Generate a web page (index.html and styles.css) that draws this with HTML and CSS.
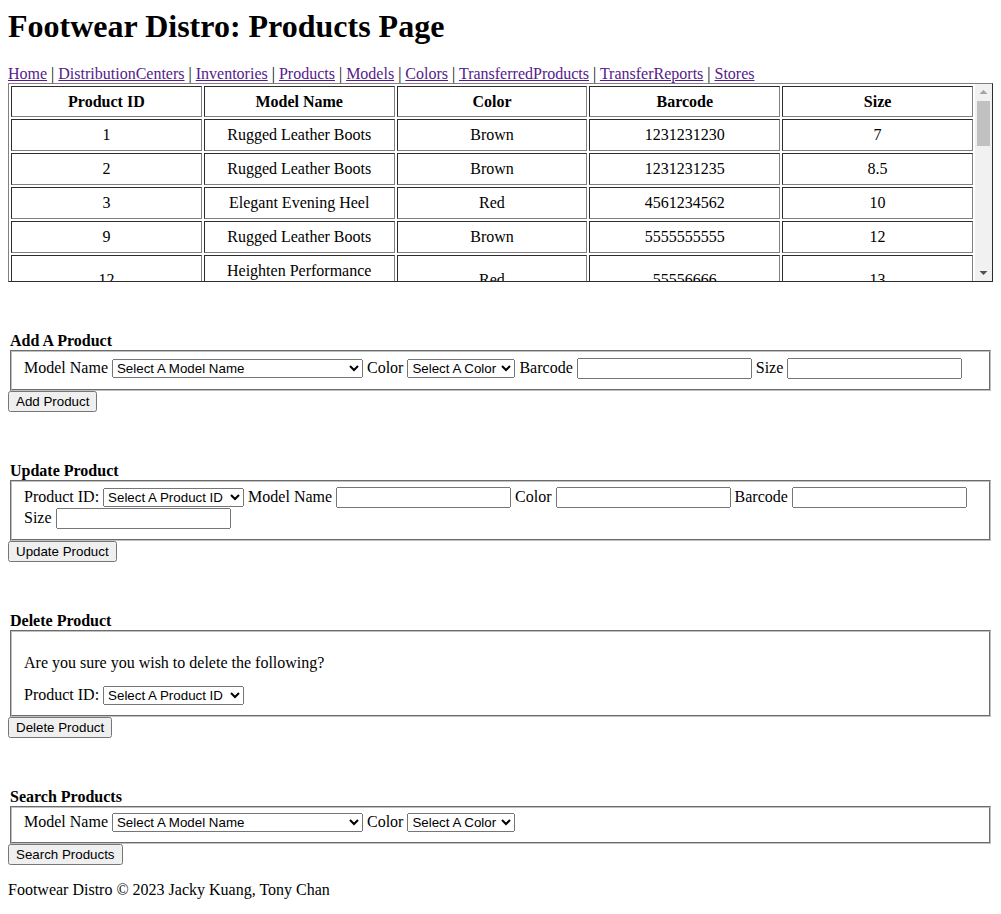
FILE: index.html
```html
<!DOCTYPE html>
<html lang="en">
<head>
<meta charset="utf-8">
<title>Footwear Distro: Products Page</title>
<link rel="stylesheet" href="styles.css">
</head>
<body>
<header class="page-header">
  <h1 class="page-title">Footwear Distro: Products Page</h1>
  <nav class="nav">
    <a href="#">Home</a> | <a href="#">DistributionCenters</a> | <a href="#">Inventories</a> | <a href="#">Products</a> | <a href="#">Models</a> | <a href="#">Colors</a> | <a href="#">TransferredProducts</a> | <a href="#">TransferReports</a> | <a href="#">Stores</a>
  </nav>
</header>

<div class="browse">
  <div class="browse-scroll">
    <table class="data-table">
      <thead>
        <tr><th>Product ID</th><th>Model Name</th><th>Color</th><th>Barcode</th><th>Size</th></tr>
      </thead>
      <tbody>
        <tr><td>1</td><td>Rugged Leather Boots</td><td>Brown</td><td>1231231230</td><td>7</td></tr>
        <tr><td>2</td><td>Rugged Leather Boots</td><td>Brown</td><td>1231231235</td><td>8.5</td></tr>
        <tr><td>3</td><td>Elegant Evening Heel</td><td>Red</td><td>4561234562</td><td>10</td></tr>
        <tr><td>9</td><td>Rugged Leather Boots</td><td>Brown</td><td>5555555555</td><td>12</td></tr>
        <tr><td>12</td><td>Heighten Performance Sneakers</td><td>Red</td><td>55556666</td><td>13</td></tr>
        <tr><td>13</td><td>Classic Canvas Sneaker</td><td>White</td><td>7788990011</td><td>9</td></tr>
        <tr><td>14</td><td>Classic Canvas Sneaker</td><td>Black</td><td>7788990012</td><td>10</td></tr>
        <tr><td>15</td><td>Elegant Evening Heel</td><td>Black</td><td>4561234563</td><td>7.5</td></tr>
        <tr><td>16</td><td>Trail Runner</td><td>Blue</td><td>3213213210</td><td>11</td></tr>
        <tr><td>17</td><td>Trail Runner</td><td>Green</td><td>3213213211</td><td>9.5</td></tr>
        <tr><td>18</td><td>Rugged Leather Boots</td><td>Black</td><td>1231231236</td><td>10</td></tr>
        <tr><td>19</td><td>Summer Sandal</td><td>Brown</td><td>6546546540</td><td>8</td></tr>
        <tr><td>20</td><td>Summer Sandal</td><td>White</td><td>6546546541</td><td>6</td></tr>
        <tr><td>21</td><td>Trail Runner</td><td>Red</td><td>3213213212</td><td>12</td></tr>
        <tr><td>22</td><td>Classic Canvas Sneaker</td><td>Red</td><td>7788990013</td><td>8</td></tr>
        <tr><td>23</td><td>Elegant Evening Heel</td><td>White</td><td>4561234564</td><td>6.5</td></tr>
        <tr><td>24</td><td>Summer Sandal</td><td>Black</td><td>6546546542</td><td>9</td></tr>
        <tr><td>25</td><td>Trail Runner</td><td>Black</td><td>3213213213</td><td>10.5</td></tr>
        <tr><td>26</td><td>Rugged Leather Boots</td><td>Red</td><td>1231231237</td><td>11</td></tr>
      </tbody>
    </table>
  </div>
  <div class="scrollbar" aria-hidden="true">
    <div class="sb-button">
      <svg width="17" height="17" viewBox="0 0 17 17"><polygon points="4.5,10 8.5,6 12.5,10" fill="#a3a3a3"/></svg>
    </div>
    <div class="sb-thumb"></div>
    <div class="sb-track"></div>
    <div class="sb-button">
      <svg width="17" height="17" viewBox="0 0 17 17"><polygon points="4.5,7 12.5,7 8.5,11" fill="#505050"/></svg>
    </div>
  </div>
</div>

<section class="crud">
  <form class="crud-form">
    <legend class="form-title">Add A Product</legend>
    <fieldset class="fields">
      <label>Model Name</label> <select class="sel-model"><option>Select A Model Name</option><option>Heighten Performance Sneakers</option></select>
      <label>Color</label> <select class="sel-color"><option>Select A Color</option><option>Brown</option></select>
      <label>Barcode</label> <input class="text-in" type="text">
      <label>Size</label> <input class="text-in" type="text">
    </fieldset>
    <input class="btn" type="button" value="Add Product">
  </form>
</section>

<section class="crud">
  <form class="crud-form">
    <legend class="form-title">Update Product</legend>
    <fieldset class="fields">
      <label>Product ID:</label> <select class="sel-id"><option>Select A Product ID</option><option>1</option></select>
      <label>Model Name</label> <input class="text-in" type="text">
      <label>Color</label> <input class="text-in" type="text">
      <label>Barcode</label> <input class="text-in" type="text">
      <label>Size</label> <input class="text-in" type="text">
    </fieldset>
    <input class="btn" type="button" value="Update Product">
  </form>
</section>

<section class="crud">
  <form class="crud-form">
    <legend class="form-title">Delete Product</legend>
    <fieldset class="fields">
      <p class="confirm">Are you sure you wish to delete the following?</p>
      <label>Product ID:</label> <select class="sel-id"><option>Select A Product ID</option><option>1</option></select>
    </fieldset>
    <input class="btn" type="button" value="Delete Product">
  </form>
</section>

<section class="crud">
  <form class="crud-form">
    <legend class="form-title">Search Products</legend>
    <fieldset class="fields">
      <label>Model Name</label> <select class="sel-model"><option>Select A Model Name</option><option>Heighten Performance Sneakers</option></select>
      <label>Color</label> <select class="sel-color"><option>Select A Color</option><option>Brown</option></select>
    </fieldset>
    <input class="btn" type="button" value="Search Products">
  </form>
</section>

<footer class="page-footer">
  <p class="footer-text">Footwear Distro &copy; 2023 Jacky Kuang, Tony Chan</p>
</footer>
</body>
</html>
```

FILE: styles.css
```css
html {
  background: #ffffff;
}

body {
  margin: 8px;
  font-family: "Liberation Serif", "Times New Roman", serif;
  font-size: 16px;
  color: #000000;
}

.page-title {
  font-size: 32px;
  font-weight: bold;
  margin: 0 0 20px 0;
}

.nav a {
  color: #551a8b;
  text-decoration: underline;
}

.browse {
  display: flex;
  height: 197px;
  border: 1px outset grey;
}

.browse-scroll {
  flex: 1;
  overflow: hidden;
}

.data-table {
  width: 100%;
  table-layout: fixed;
  border-collapse: separate;
  border-spacing: 2px;
}

.data-table th,
.data-table td {
  border: 1px inset grey;
  padding: 6px;
  text-align: center;
  vertical-align: middle;
}

.data-table th {
  font-weight: bold;
  padding: 6px 6px 5px;
}

.scrollbar {
  width: 17px;
  flex: none;
  display: flex;
  flex-direction: column;
  background: #f1f1f1;
}

.sb-button {
  height: 17px;
  flex: none;
}

.sb-button svg {
  display: block;
}

.sb-thumb {
  height: 45px;
  margin: 0 2px;
  background: #c1c1c1;
  flex: none;
}

.sb-track {
  flex: 1;
}

.crud {
  margin-top: 50px;
}

.crud-form {
  margin: 0;
}

.form-title {
  display: block;
  padding: 0 2px;
  font-weight: bold;
}

.fields {
  margin: 0 2px;
  padding: 0.35em 0.75em 0.625em;
  border: 2px groove rgb(192, 192, 192);
}

.confirm {
  margin: 16px 0 14px;
}

select,
input,
.btn {
  font-family: "Liberation Sans", Arial, sans-serif;
  font-size: 13.333px;
}

select {
  height: 19px;
  box-sizing: border-box;
}

.sel-model {
  width: 251px;
}

.sel-color {
  width: 108px;
}

.sel-id {
  width: 141px;
}

.text-in {
  width: 175px;
  height: 21px;
  box-sizing: border-box;
}

.page-footer {
  margin: 0;
}

.footer-text {
  margin: 16px 0;
}
```
